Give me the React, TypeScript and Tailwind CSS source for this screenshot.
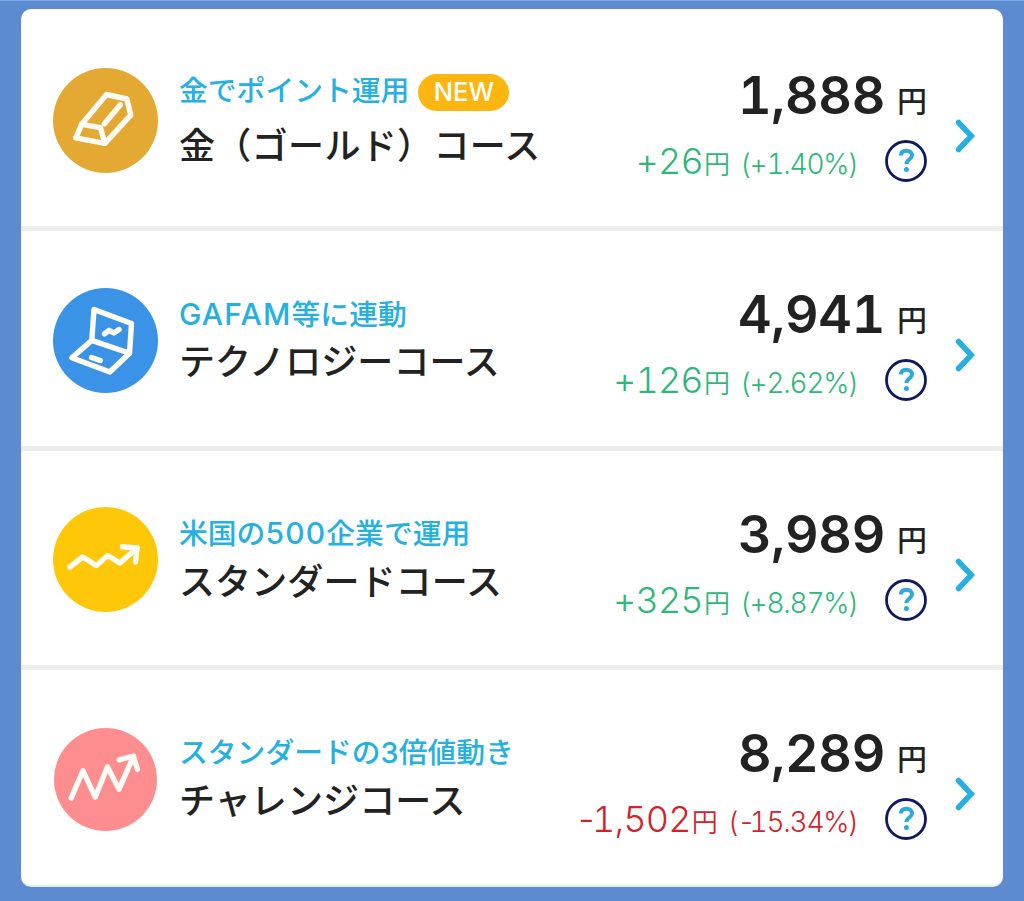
import type { ReactNode } from "react";
import clsx from "clsx";

interface Course {
  id: string;
  tagline: string;
  name: string;
  amount: string;
  diff: string;
  rate: string;
  isNew?: boolean;
  iconClass: string;
  icon: ReactNode;
}

const courses: Course[] = [
  {
    id: "gold",
    tagline: "金でポイント運用",
    name: "金（ゴールド）コース",
    amount: "1,888",
    diff: "+26",
    rate: "+1.40%",
    isNew: true,
    iconClass: "size-[105px] bg-[#e4a933]",
    icon: (
      <>
        <path d="M53.5 26.5 73.8 31 77.8 47.2 51.8 75.3 22.8 69.8 28.7 56.3Z" />
        <path d="M28.7 56.3 47.5 59.6 51.8 75.3" />
        <path d="M67.3 36.8 51.5 55.8" />
      </>
    ),
  },
  {
    id: "technology",
    tagline: "GAFAM等に連動",
    name: "テクノロジーコース",
    amount: "4,941",
    diff: "+126",
    rate: "+2.62%",
    iconClass: "size-[105px] bg-[#3a93e6]",
    icon: (
      <>
        <path d="M41 21.5 78.5 35.5 76.5 65.2 38.8 52.4Z" />
        <path d="M38.8 52.4 18.9 69.7 56.8 84 76.5 65.2" />
        <path d="M51.5 45.8 56 42.3 60.8 45 66 41.5" />
        <path d="M38.5 69.5 47.2 72.5" />
      </>
    ),
  },
  {
    id: "standard",
    tagline: "米国の500企業で運用",
    name: "スタンダードコース",
    amount: "3,989",
    diff: "+325",
    rate: "+8.87%",
    iconClass: "size-[105px] bg-[#fec707]",
    icon: (
      <>
        <path d="M17 60 29.8 50 43.2 58.5 54.8 48.5 66.8 56 84 41" />
        <path d="M69.5 39.8 84 41 82.5 55" />
      </>
    ),
  },
  {
    id: "challenge",
    tagline: "スタンダードの3倍値動き",
    name: "チャレンジコース",
    amount: "8,289",
    diff: "-1,502",
    rate: "-15.34%",
    iconClass: "m-px size-[103px] bg-[#fe8d8f]",
    icon: (
      <>
        <path d="M17.5 71.5 29.5 43.5 42 70.5 54.5 39.5 66.2 62.6 81 29" />
        <path d="M66.5 32.5 81 28.5 85 42" />
      </>
    ),
  },
];

function HelpIcon() {
  return (
    <svg viewBox="0 0 42 42" className="size-[42px]" fill="none">
      <circle cx="21" cy="21" r="19.5" stroke="#101a60" strokeWidth="2.8" />
      <path d="M15.7 15.4c.4-3.2 2.7-4.7 5.6-4.7 3.3 0 5.7 1.9 5.7 4.7 0 3.9-5.6 4.3-5.6 8.6" stroke="#2ba9e1" strokeWidth="4" />
      <circle cx="21.4" cy="29.4" r="2.5" fill="#2ba9e1" />
    </svg>
  );
}

// Latin runs are set a little larger and wider than the kana around them
function Tagline({ text }: { text: string }) {
  return (
    <span>
      {text.split(/([A-Z]{2,}|\d{2,})/).map((part, i) =>
        i % 2 ? (
          <span key={i} className="text-[30px] tracking-[1.2px]">
            {part}
          </span>
        ) : (
          part
        ),
      )}
    </span>
  );
}

function Signed({ value }: { value: string }) {
  return (
    <>
      <span className={clsx(value.startsWith("-") && "tracking-[-6px]")}>{value[0]}</span>
      {value.slice(1)}
    </>
  );
}

function CourseRow({ course }: { course: Course }) {
  const negative = course.diff.startsWith("-");

  return (
    <li className="flex h-[219.5px] border-b-5 border-[#ededed] pl-[31.5px] last:border-transparent">
      <div className="mt-[56.5px] w-[105px] shrink-0">
        <div className={clsx("rounded-full", course.iconClass)}>
          <svg viewBox="0 0 105 105" className="size-full" fill="none" stroke="#fffdf6" strokeWidth="5.4" strokeLinecap="round" strokeLinejoin="round">
            {course.icon}
          </svg>
        </div>
      </div>

      <div className={clsx("ml-[21.5px] flex h-[216px] flex-1 flex-col justify-center whitespace-nowrap", course.isNew && "gap-[7px]")}>
        <p className="flex h-[42px] items-center pt-0.5 text-[28.8px] font-medium leading-[42px] text-[#25b0e2]">
          <Tagline text={course.tagline} />
          {course.isNew && (
            <span className="mt-0.5 ml-[9px] flex h-[37px] w-[91px] items-center justify-center rounded-full bg-[#fdb50f] text-[25.5px] leading-none text-white">
              NEW
            </span>
          )}
        </p>
        <p className={clsx("h-[52px] pt-0.5 text-[36px] font-medium leading-[52px] text-[#222]", course.isNew ? "tracking-[0.35px]" : "tracking-[0.1px]")}>
          {course.name}
        </p>
      </div>

      <div className="flex flex-col items-end pt-[50px] tabular-nums">
        <p className="flex h-[68px] items-baseline text-[#222]">
          <span className="text-[52px] font-[580] leading-[68px] tracking-[-0.3px]">{course.amount}</span>
          <span className="relative -top-0.5 ml-3 text-[30px] font-medium leading-none">円</span>
        </p>
        <div className="flex h-[62px] items-center">
          <p className={clsx("flex items-baseline leading-none", negative ? "text-[#d3222a]" : "text-[#2fb67a]")}>
            <span className="text-[36px] font-light leading-none tracking-[-0.8px]">
              <Signed value={course.diff} />
            </span>
            <span className="ml-px text-[26px] font-[350] leading-none">円</span>
            <span className="ml-2.5 text-[28px] font-light leading-none tracking-[-1.25px]">
              (<Signed value={course.rate} />)
            </span>
          </p>
          <div className="ml-[27px]">
            <HelpIcon />
          </div>
        </div>
      </div>

      <svg viewBox="0 0 20 34" className="mr-[28px] ml-7 mt-[107px] h-[34px] w-5 shrink-0" fill="none">
        <path d="M3.5 3.5 16.3 17 3.5 30.5" stroke="#26afe3" strokeWidth="5.5" strokeLinecap="round" strokeLinejoin="miter" />
      </svg>
    </li>
  );
}

export default function App() {
  return (
    <main className="h-[901px] overflow-hidden border-t border-[#7fabe6] bg-[#5c8ccf] px-[21px] pt-2 font-[Inter,'Noto_Sans_CJK_JP',sans-serif]">
      <ul className="h-[878px] overflow-hidden rounded-[10px] border-b-2 border-[#e3edf7] bg-white pt-[2.5px]">
        {courses.map((course) => (
          <CourseRow key={course.id} course={course} />
        ))}
      </ul>
    </main>
  );
}
